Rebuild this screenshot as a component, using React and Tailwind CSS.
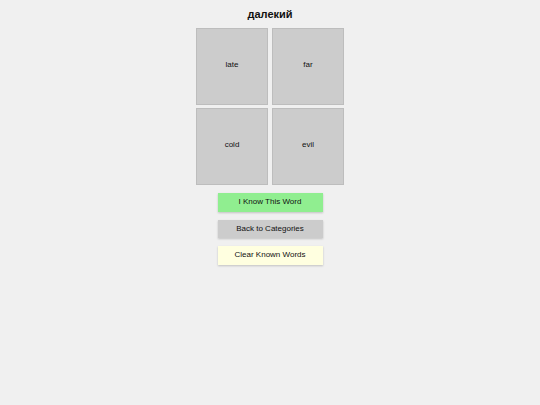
import React from "react";

const options = ["late", "far", "cold", "evil"];

const buttons = [
  { label: "I Know This Word", className: "bg-[#90ee90]" },
  { label: "Back to Categories", className: "bg-[#cccccc]" },
  { label: "Clear Known Words", className: "bg-[#ffffe0]" },
];

export default function App() {
  return (
    <div
      className="min-h-[405px] w-full bg-[#f0f0f0] flex flex-col items-center text-[#111]"
      style={{ fontFamily: '"Liberation Sans", Arial, sans-serif' }}
    >
      <h1 className="mt-[8px] text-[11px] leading-[13px] font-bold">далекий</h1>

      <div className="mt-[7px] grid grid-cols-[72px_72px] gap-x-[4px] gap-y-[3px]">
        {options.map((opt) => (
          <div
            key={opt}
            className="h-[77px] pb-[4px] bg-[#cccccc] border border-[#bdbdbd] flex items-center justify-center text-[8px]"
          >
            {opt}
          </div>
        ))}
      </div>

      <div className="mt-[8px] flex flex-col items-center gap-[8px]">
        {buttons.map((b) => (
          <button
            key={b.label}
            className={`w-[105px] h-[18.5px] flex items-center justify-center text-[8px] text-[#111] shadow-[0_1px_2px_rgba(0,0,0,0.2)] ${b.className}`}
          >
            {b.label}
          </button>
        ))}
      </div>
    </div>
  );
}
